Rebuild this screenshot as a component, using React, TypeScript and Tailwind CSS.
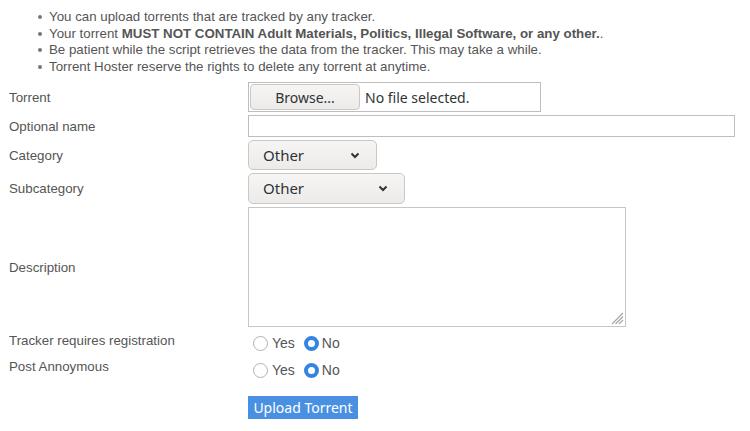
import React from "react";

const notes: React.ReactNode[] = [
	"You can upload torrents that are tracked by any tracker.",
	<>
		Your torrent{" "}
		<b className="font-bold">
			MUST NOT CONTAIN Adult Materials, Politics, Illegal Software, or any other.
		</b>
		.
	</>,
	"Be patient while the script retrieves the data from the tracker. This may take a while.",
	"Torrent Hoster reserve the rights to delete any torrent at anytime.",
];

const Chevron = () => (
	<svg width="10" height="7" viewBox="0 0 10 7" className="shrink-0">
		<path d="M1.5 1.5 L5 5 L8.5 1.5" fill="none" stroke="#2e3436" strokeWidth="2" />
	</svg>
);

const Select = ({ width, height }: { width: string; height: string }) => (
	<div
		className={`flex ${height} ${width} items-center justify-between rounded-[5px] border border-[#cdc7c2] bg-gradient-to-b from-[#f6f5f4] to-[#edebe9] pl-[14px] pr-[16px] text-[15px] text-[#2e3436]`}
	>
		<span>Other</span>
		<Chevron />
	</div>
);

const Radio = ({ checked }: { checked?: boolean }) =>
	checked ? (
		<span className="inline-block h-[15px] w-[15px] rounded-full border-[4px] border-[#3584e4] bg-white" />
	) : (
		<span className="inline-block h-[15px] w-[15px] rounded-full border border-[#b6b0aa] bg-white" />
	);

const RadioPair = () => (
	<div className="flex items-center pl-[5px] text-[14px] leading-[16px] text-[#555]">
		<Radio />
		<span className="ml-[4px]">Yes</span>
		<span className="ml-[9px] flex items-center">
			<Radio checked />
		</span>
		<span className="ml-[3px]">No</span>
	</div>
);

const Label = ({ children }: { children: React.ReactNode }) => (
	<div className="pl-[9px] text-[13.3px] leading-[15px] text-[#555]">{children}</div>
);

export default function App() {
	return (
		<div
			className="min-h-[431px] w-[750px] bg-white"
			style={{ fontFamily: '"Liberation Sans", Arial, sans-serif' }}
		>
			<ul className="pt-[9px] text-[13.3px] leading-[16.5px] text-[#555]">
				{notes.map((n, i) => (
					<li key={i} className="flex items-center">
						<span className="ml-[38px] mr-[7px] h-[4px] w-[4px] rounded-full bg-[#777]" />
						<span>{n}</span>
					</li>
				))}
			</ul>

			<div className="mt-[7px] grid grid-cols-[248px_1fr] items-center gap-y-[3px]">
				<Label>Torrent</Label>
				<div className="flex h-[30px] w-[293px] items-center border border-[#bdbdbd] p-[1px]">
					<div className="flex h-full w-[110px] items-center justify-center rounded-[4px] border border-[#cdc7c2] bg-gradient-to-b from-[#f6f5f4] to-[#edebe9] font-['Noto_Sans',sans-serif] text-[14px] text-[#2e3436]">
						Browse...
					</div>
					<span className="ml-[5px] font-['Noto_Sans',sans-serif] text-[14px] text-[#2e3436]">
						No file selected.
					</span>
				</div>

				<Label>Optional name</Label>
				<div className="h-[22px] w-[487px] border border-[#bdbdbd] bg-white" />

				<Label>Category</Label>
				<div className="font-['Noto_Sans',sans-serif]">
					<Select width="w-[129px]" height="h-[30px]" />
				</div>

				<Label>Subcategory</Label>
				<div className="font-['Noto_Sans',sans-serif]">
					<Select width="w-[157px]" height="h-[31px]" />
				</div>

				<Label>Description</Label>
				<div className="relative h-[120px] w-[378px] border border-[#c6c6c6] bg-white">
					<svg
						width="14"
						height="14"
						viewBox="0 0 14 14"
						className="absolute bottom-[1px] right-[1px]"
					>
						<path
							d="M13 2 L2 13 M13 5.5 L5.5 13 M13 9 L9 13"
							stroke="#a8a8a8"
							strokeWidth="1.2"
						/>
					</svg>
				</div>
			</div>

			<div className="grid grid-cols-[248px_1fr] items-start">
				<div className="h-[26px] pt-[6px]">
					<Label>Tracker requires registration</Label>
				</div>
				<div className="h-[26px] pt-[8px]">
					<RadioPair />
				</div>

				<div className="h-[26px] pt-[6px]">
					<Label>Post Annoymous</Label>
				</div>
				<div className="h-[26px] pt-[9px]">
					<RadioPair />
				</div>
			</div>

			<div className="ml-[248px] mt-[17px]">
				<div className="inline-flex h-[23px] w-[110px] items-center justify-center bg-[#4a90e2] font-['Noto_Sans',sans-serif] text-[14px] text-white">
					Upload Torrent
				</div>
			</div>
		</div>
	);
}
